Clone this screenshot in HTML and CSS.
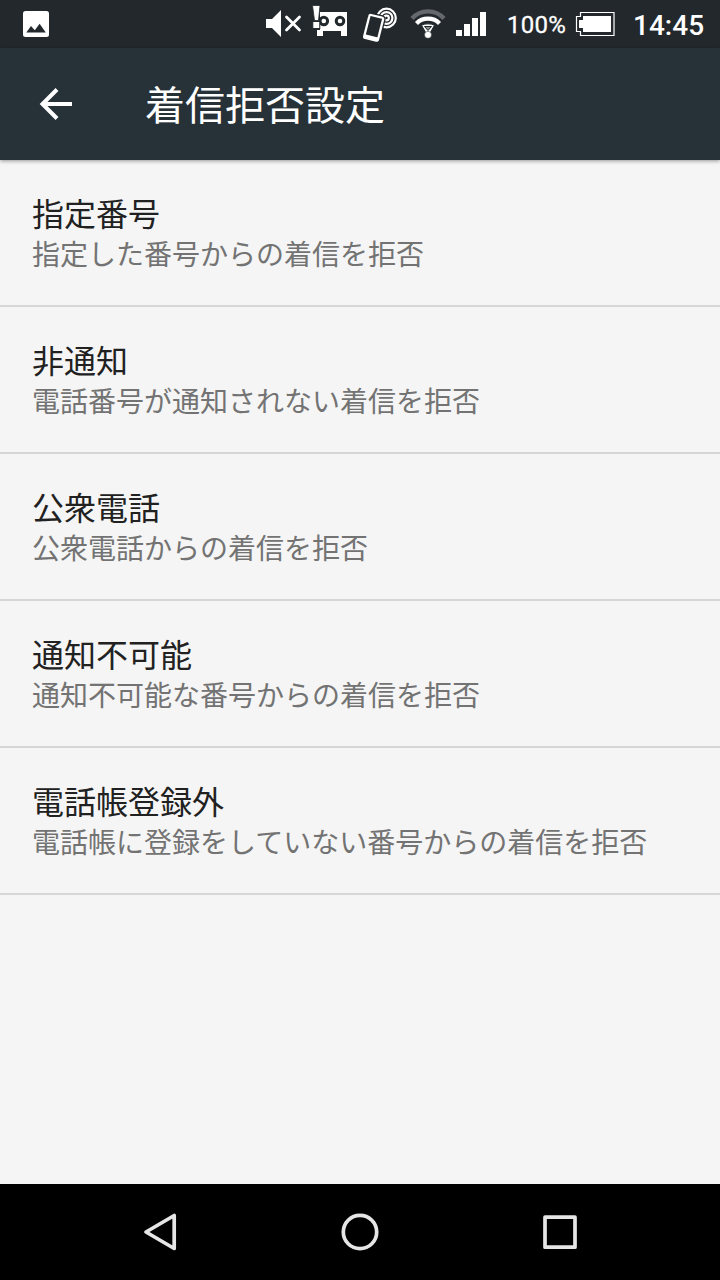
FILE: index.html
```html
<!DOCTYPE html>
<html lang="ja">
<head>
    <meta charset="UTF-8">
    <meta name="viewport" content="width=device-width, initial-scale=1.0">
    <title>着信拒否設定</title>
    <link rel="stylesheet" href="styles.css">
</head>
<body>
    <div class="status-bar">
        <svg class="icon-picture" width="26" height="48" viewBox="0 0 26 48">
            <rect x="0" y="11" width="26" height="26" rx="2.5" fill="#fff"/>
            <path d="M3.3 32.5L8 26l3.8 4.2 4.8-6.4 6.2 8.7z" fill="#22282c"/>
        </svg>
        <div class="status-icons">
            <svg class="icon-mute" width="36" height="48" viewBox="0 0 36 48">
                <path d="M0 19h6l9-9v27l-9-9H0z" fill="#fff"/>
                <path d="M20.5 17l13 13M33.5 17l-13 13" stroke="#fff" stroke-width="2.8" stroke-linecap="round"/>
            </svg>
            <svg class="icon-memo" width="34" height="48" viewBox="0 0 34 48">
                <path d="M8 12h26v24h-6v-5H10v5H4v-6h3V12z" fill="#fff"/>
                <circle cx="10.8" cy="21" r="3.8" fill="#fff" stroke="#22282c" stroke-width="3"/>
                <circle cx="27" cy="21" r="3.8" fill="#fff" stroke="#22282c" stroke-width="3"/>
                <path d="M-.5 5.5h7.5L5.500 20.500h-4z" fill="#fff" stroke="#22282c" stroke-width=".8"/>
                <rect x="-.2" y="21.5" width="7" height="7" fill="#fff" stroke="#22282c"/>
            </svg>
            <svg class="icon-nfc" width="35" height="48" viewBox="0 0 35 48">
                <g fill="none" stroke="#fff" stroke-width="2.2">
                    <circle cx="23.5" cy="18" r="2.3"/>
                    <circle cx="23.5" cy="18" r="5.9"/>
                    <circle cx="23.5" cy="18" r="9.3"/>
                </g>
                <path d="M8 15l11 2.6c1 .2 1.4.9 1.1 1.8L15 39.5c-.2.9-.9 1.3-1.8 1.1L2.3 38c-.9-.2-1.3-.9-1.1-1.8L6.300 16.200c.2-.9.8-1.400 1.700-1.200z" fill="#22282c" stroke="#22282c" stroke-width="5"/>
                <path d="M8 15l11 2.6c1 .2 1.4.9 1.1 1.8L15 39.5c-.2.9-.9 1.3-1.8 1.1L2.3 38c-.9-.2-1.3-.9-1.1-1.8L6.300 16.200c.2-.9.8-1.400 1.700-1.200z" fill="#22282c" stroke="#fff" stroke-width="2.3"/>
                <path d="M2 34.3l14 3.4-1.2 3.3L1.500 38z" fill="#fff"/>
            </svg>
            <svg class="icon-wifi" width="34" height="48" viewBox="0 0 34 48">
                <path d="M1 18.5C9.500 9 24.500 9 33 18.500" fill="none" stroke="#65696c" stroke-width="4.2"/>
                <path d="M5.500 23.500c6-6.400 17-6.400 23 0" fill="none" stroke="#fff" stroke-width="4.2"/>
                <path d="M10.500 25.200c4-1.800 9-1.800 13 0l-4.500 8h-4z" fill="#fff" stroke="#22282c"/>
                <path d="M13.500 26.500h7L17 30.500z" fill="#8a8e90" stroke="#22282c"/>
                <circle cx="17" cy="34.800" r="3.500" fill="#fff" stroke="#22282c" stroke-width=".5"/>
            </svg>
            <svg class="icon-signal" width="30" height="48" viewBox="0 0 30 48">
                <path d="M0 30h6v6H0zM8 24h6v12H8zM16 18h6v18h-6zM24 12h6v24h-6z" fill="#fff"/>
            </svg>
            <span class="battery-level">100%</span>
            <svg class="icon-battery" width="39" height="48" viewBox="0 0 39 48">
                <path d="M4.500 12.500h33.500v23h-33.500v-4h-4v-15h4z" fill="none" stroke="#fff" stroke-width="1.2"/>
                <path d="M7 16h28v16H7v-4H3v-8h4z" fill="#fff"/>
            </svg>
            <span class="clock">14:45</span>
        </div>
    </div>

    <header class="toolbar">
        <svg class="icon-back" width="34" height="34" viewBox="0 0 34 34">
            <path d="M33 17H4M18 2.500L3.500 17 18 31.500" fill="none" stroke="#fff" stroke-width="4"/>
        </svg>
        <h1>着信拒否設定</h1>
    </header>

    <main class="settings-list">
        <div class="setting">
            <h2>指定番号</h2>
            <p>指定した番号からの着信を拒否</p>
        </div>
        <div class="setting">
            <h2>非通知</h2>
            <p>電話番号が通知されない着信を拒否</p>
        </div>
        <div class="setting">
            <h2>公衆電話</h2>
            <p>公衆電話からの着信を拒否</p>
        </div>
        <div class="setting">
            <h2>通知不可能</h2>
            <p>通知不可能な番号からの着信を拒否</p>
        </div>
        <div class="setting">
            <h2>電話帳登録外</h2>
            <p>電話帳に登録をしていない番号からの着信を拒否</p>
        </div>
    </main>

    <nav class="nav-bar">
        <svg width="40" height="40" viewBox="0 0 40 40">
            <path d="M34.2 3.500v33L6 20z"/>
        </svg>
        <svg width="40" height="40" viewBox="0 0 40 40">
            <circle cx="20" cy="20" r="16.7"/>
        </svg>
        <svg width="40" height="40" viewBox="0 0 40 40">
            <rect x="5" y="5.2" width="30" height="30"/>
        </svg>
    </nav>
</body>
</html>
```

FILE: styles.css
```css
* {
    margin: 0;
    padding: 0;
    box-sizing: border-box;
}

body {
    height: 1280px;
    display: flex;
    flex-direction: column;
    background: #f5f5f5;
    font-family: Roboto, "Noto Sans CJK JP", sans-serif;
    overflow: hidden;
}

svg {
    display: block;
    flex-shrink: 0;
    overflow: visible;
}

.status-bar {
    height: 48px;
    padding: 0 16px 0 23px;
    background: #22282c;
    color: #fff;
    display: flex;
    justify-content: space-between;
}

.status-icons {
    display: flex;
    align-items: center;
}

.icon-mute {
    margin-right: 11px;
}

.icon-memo {
    margin-right: 16px;
}

.icon-nfc {
    margin-right: 13px;
}

.icon-wifi {
    margin-right: 11px;
}

.icon-signal {
    margin-right: 21px;
}

.battery-level {
    width: 60px;
    padding-top: 2px;
    margin-right: 9px;
    font-size: 24px;
    line-height: 48px;
    letter-spacing: 0.3px;
    white-space: nowrap;
    -webkit-text-stroke: 0.3px #fff;
}

.icon-battery {
    margin-right: 18px;
}

.clock {
    width: 71px;
    padding-top: 3px;
    font-size: 28px;
    font-weight: 500;
    line-height: 50px;
    white-space: nowrap;
}

.toolbar {
    height: 112px;
    padding-left: 39px;
    background: #273238;
    color: #fff;
    display: flex;
    align-items: center;
    gap: 72px;
    box-shadow: 0 1px 4px rgba(0, 0, 0, 0.4);
}

.toolbar h1 {
    padding-top: 6px;
    font-size: 40px;
    font-weight: 400;
    line-height: 60px;
}

.settings-list {
    flex: 1;
}

.setting {
    height: 147px;
    padding: 33px 32px 0;
    border-bottom: 2px solid #d6d6d6;
}

.setting h2 {
    font-size: 32px;
    font-weight: 400;
    line-height: 44px;
    color: #212121;
}

.setting p {
    font-size: 28px;
    line-height: 38px;
    color: #737373;
    white-space: nowrap;
}

.nav-bar {
    height: 96px;
    background: #000;
    display: flex;
    align-items: center;
    justify-content: center;
    gap: 160px;
}

.nav-bar svg {
    fill: none;
    stroke: #e6e6e6;
    stroke-width: 3.7;
    stroke-linejoin: round;
}
```
